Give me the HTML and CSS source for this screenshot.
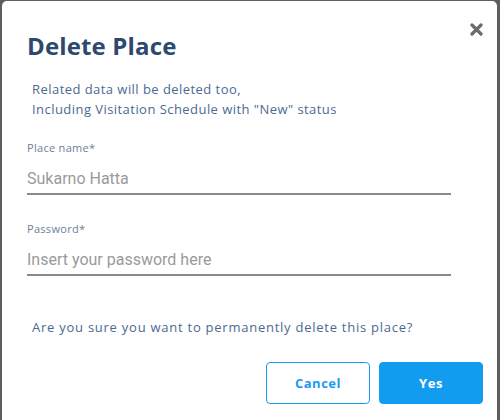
FILE: index.html
```html
<!DOCTYPE html>
<html>
<head>
<meta charset="utf-8">
<link rel="stylesheet" href="styles.css">
</head>
<body>
<div class="modal">
  <button class="close" aria-label="Close">
    <svg width="13" height="13" viewBox="0 0 13 13"><path d="M2 2 L11 11 M11 2 L2 11" stroke="#6b6b6b" stroke-width="3.2" stroke-linecap="round"/></svg>
  </button>
  <h1 class="title">Delete Place</h1>
  <p class="desc">Related data will be deleted too,<br>Including Visitation Schedule with "New" status</p>
  <div class="field">
    <label class="label">Place name*</label>
    <div class="input value">Sukarno Hatta</div>
  </div>
  <div class="field">
    <label class="label">Password*</label>
    <div class="input placeholder">Insert your password here</div>
  </div>
  <p class="question">Are you sure you want to permanently delete this place?</p>
  <div class="actions">
    <button class="btn btn-outline">Cancel</button>
    <button class="btn btn-primary">Yes</button>
  </div>
</div>
</body>
</html>
```
FILE: styles.css
```css
html, body { margin: 0; padding: 0; }
body {
  background: #5e5e5e;
  width: 500px;
  height: 420px;
  overflow: hidden;
  font-family: "Open Sans", "Noto Sans", sans-serif;
}
.modal {
  position: relative;
  margin: 1px 3px 0 2px;
  height: 440px;
  background: #fff;
  border-radius: 5px;
  padding: 0 0 0 25px;
  box-sizing: border-box;
}
.close {
  position: absolute;
  top: 22px;
  right: 14px;
  border: 0;
  background: none;
  padding: 0;
  width: 13px;
  height: 13px;
  display: flex;
}
.title {
  margin: 0;
  padding-top: 30px;
  font-size: 24px;
  line-height: 30px;
  font-weight: 700;
  color: #2d4a6e;
  letter-spacing: 0.15px;
}
.desc {
  margin: 18px 0 0 5px;
  font-size: 13px;
  line-height: 20px;
  color: #4b6a92;
  font-weight: 500;
  letter-spacing: 0.45px;
}
.field {
  width: 424px;
}
.desc + .field { margin-top: 22px; }
.field + .field { margin-top: 27px; }
.label {
  display: block;
  font-size: 11px;
  line-height: 14px;
  color: #6d8099;
  font-weight: 500;
  letter-spacing: 0.3px;
}
.input {
  margin-top: 13px;
  font-family: Roboto, sans-serif;
  font-size: 16px;
  line-height: 22px;
  padding-bottom: 3px;
  border-bottom: 2px solid #8a8a8a;
  color: #9a9a9a;
}
.question {
  margin: 41px 0 0 5px;
  font-size: 13px;
  line-height: 20px;
  color: #4b6a92;
  font-weight: 500;
  letter-spacing: 0.75px;
}
.actions {
  display: flex;
  justify-content: flex-end;
  gap: 9px;
  margin-top: 25px;
  padding-right: 14px;
}
.btn {
  width: 104px;
  height: 42px;
  border-radius: 4px;
  font-family: "Open Sans", sans-serif;
  font-size: 13px;
  font-weight: 700;
  letter-spacing: 0.5px;
  cursor: pointer;
}
.btn-outline {
  background: #fff;
  border: 1px solid #1a9cf0;
  color: #1a9cf0;
}
.btn-primary {
  background: #129cf0;
  border: 1px solid #129cf0;
  color: #fff;
}
```
